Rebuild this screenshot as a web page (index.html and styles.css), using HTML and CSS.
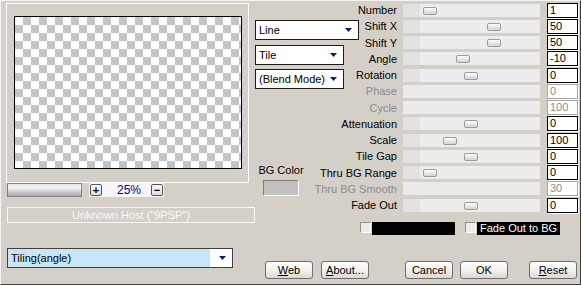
FILE: index.html
```html
<!DOCTYPE html>
<html lang="en">
<head>
    <meta charset="UTF-8">
    <title>Tiling(angle)</title>
    <link rel="stylesheet" href="styles.css">
</head>
<body>
    <div class="window">
        <div class="main">
            <div class="preview-side">
                <div class="preview-frame">
                    <div class="canvas"></div>
                </div>
                <div class="zoom-row">
                    <div class="zoom-bar"></div>
                    <div class="zoom-spin">
                        <span class="spin-btn">+</span>
                        <span class="zoom-value">25%</span>
                        <span class="spin-btn spin-minus">&minus;</span>
                    </div>
                </div>
                <div class="host-status">Unknown Host ("9PSP")</div>
            </div>

            <div class="controls">
                <div class="params-area">
                    <div class="mode-panel">
                        <div class="select select-line"><span>Line</span><svg class="arrow" width="7" height="4"><path d="M0 0h7L3.5 4z"/></svg></div>
                        <div class="select select-tile"><span>Tile</span><svg class="arrow" width="7" height="4"><path d="M0 0h7L3.5 4z"/></svg></div>
                        <div class="select select-blend"><span>(Blend Mode)</span><svg class="arrow" width="7" height="4"><path d="M0 0h7L3.5 4z"/></svg></div>
                        <div class="bg-color">
                            <span>BG Color</span>
                            <div class="swatch"></div>
                        </div>
                    </div>

                    <div class="param-list">
                        <span class="param-label">Number</span>
                        <div class="track"><span class="thumb" style="--pos: 20px"></span></div>
                        <div class="num">1</div>

                        <span class="param-label">Shift X</span>
                        <div class="track"><span class="thumb" style="--pos: 84px"></span></div>
                        <div class="num">50</div>

                        <span class="param-label">Shift Y</span>
                        <div class="track"><span class="thumb" style="--pos: 84px"></span></div>
                        <div class="num">50</div>

                        <span class="param-label">Angle</span>
                        <div class="track"><span class="thumb" style="--pos: 53px"></span></div>
                        <div class="num">-10</div>

                        <span class="param-label">Rotation</span>
                        <div class="track"><span class="thumb" style="--pos: 61px"></span></div>
                        <div class="num">0</div>

                        <span class="param-label disabled">Phase</span>
                        <div class="track track-off"></div>
                        <div class="num disabled">0</div>

                        <span class="param-label disabled">Cycle</span>
                        <div class="track track-off"></div>
                        <div class="num disabled">100</div>

                        <span class="param-label">Attenuation</span>
                        <div class="track"><span class="thumb" style="--pos: 61px"></span></div>
                        <div class="num">0</div>

                        <span class="param-label">Scale</span>
                        <div class="track"><span class="thumb" style="--pos: 40px"></span></div>
                        <div class="num">100</div>

                        <span class="param-label">Tile Gap</span>
                        <div class="track"><span class="thumb" style="--pos: 61px"></span></div>
                        <div class="num">0</div>

                        <span class="param-label">Thru BG Range</span>
                        <div class="track"><span class="thumb" style="--pos: 20px"></span></div>
                        <div class="num">0</div>

                        <span class="param-label disabled">Thru BG Smooth</span>
                        <div class="track track-off"></div>
                        <div class="num disabled">30</div>

                        <span class="param-label">Fade Out</span>
                        <div class="track"><span class="thumb" style="--pos: 61px"></span></div>
                        <div class="num">0</div>
                    </div>
                </div>

                <div class="flags">
                    <span class="check"></span>
                    <span class="color-bar"></span>
                    <span class="check check-second"></span>
                    <span class="color-bar">Fade Out to BG</span>
                </div>
            </div>
        </div>

        <div class="footer">
            <div class="select select-wide">
                <span class="value">Tiling(angle)</span>
                <svg class="arrow" width="7" height="4"><path d="M0 0h7L3.5 4z"/></svg>
            </div>
            <button class="btn btn-web"><u>W</u>eb</button>
            <button class="btn btn-about"><u>A</u>bout...</button>
            <button class="btn btn-cancel">Cancel</button>
            <button class="btn btn-ok">OK</button>
            <button class="btn btn-reset"><u>R</u>eset</button>
        </div>
    </div>
</body>
</html>
```

FILE: styles.css
```css
:root {
    --face: #d4d0c8;
    --navy: #0c1c6c;
    --disabled: #8c8c8c;
}

body {
    margin: 0;
    background: var(--face);
}

.window {
    width: 581px;
    height: 285px;
    box-sizing: border-box;
    border: 1px solid;
    border-color: #f4f4f4 #404040 #404040 #f4f4f4;
    background: var(--face);
    padding: 1px 0 0 5px;
    display: flex;
    flex-direction: column;
    font: 11px "Liberation Sans", Arial, sans-serif;
    color: #000;
}

.main {
    display: flex;
}

/* preview side */
.preview-side {
    width: 249px;
    display: flex;
    flex-direction: column;
}

.preview-frame {
    margin-top: 1px;
    width: 243px;
    height: 180px;
    box-sizing: border-box;
    border: 1px solid #fbfbfb;
    padding: 12px 0 0 7px;
}

.canvas {
    width: 228px;
    height: 153px;
    box-sizing: border-box;
    border: 1px solid #000;
    background: repeating-conic-gradient(#c4c4c4 0 25%, #fff 0 50%) 0 0 / 16px 16px;
}

.zoom-row {
    display: flex;
    height: 14px;
    margin-left: 1px;
}

.zoom-bar {
    width: 75px;
    box-sizing: border-box;
    border: 1px solid #8a8a8a;
    border-left-color: #22c022;
    background: linear-gradient(#e4e4e4, #f6f6f6 30%, #c8c8c8 70%, #a6a6a6);
}

.zoom-spin {
    margin-left: 7px;
    width: 75px;
    box-sizing: border-box;
    padding: 0 1px;
    background: #f6f6f6;
    display: flex;
    align-items: center;
}

.spin-btn {
    width: 12px;
    height: 12px;
    box-sizing: border-box;
    border: 1px solid #555;
    border-radius: 2px;
    background: linear-gradient(#fdfdfd, #dcdcdc);
    font-size: 11px;
    font-weight: bold;
    line-height: 10px;
    text-align: center;
}

.zoom-value {
    margin-left: 15px;
    color: #000080;
    font-size: 12px;
}

.spin-minus {
    margin-left: auto;
}

.host-status {
    margin: 10px 0 0 1px;
    width: 248px;
    height: 16px;
    box-sizing: border-box;
    border: 1px solid #f8f8f8;
    color: #f8f8f8;
    text-align: center;
    line-height: 14px;
}

/* right side controls */
.controls {
    flex: 1;
    display: flex;
    flex-direction: column;
}

.params-area {
    display: grid;
}

.params-area > * {
    grid-area: 1 / 1;
}

.mode-panel {
    display: flex;
    flex-direction: column;
    align-items: flex-start;
    padding-top: 18px;
}

.select {
    height: 20px;
    box-sizing: border-box;
    border: 1px solid #1c1c1c;
    background: #fff;
    display: flex;
    align-items: center;
    justify-content: space-between;
    padding: 0 6px 0 3px;
}

.arrow {
    fill: var(--navy);
    flex: none;
}

.select-line {
    width: 104px;
}

.select-tile {
    width: 89px;
    margin-top: 5px;
}

.select-blend {
    width: 89px;
    margin-top: 4px;
}

.bg-color {
    margin: 74px 0 0 3px;
    width: 46px;
    display: flex;
    flex-direction: column;
    align-items: center;
    line-height: 14px;
}

.swatch {
    margin-top: 3px;
    width: 36px;
    height: 16px;
    box-sizing: border-box;
    border: 1px solid;
    border-color: #808080 #fff #fff #808080;
    background: #c0c0c0;
}

.param-list {
    display: grid;
    grid-template-columns: 142px 143px 40px;
    grid-auto-rows: 16.25px;
    align-items: center;
}

.param-label {
    text-align: right;
    line-height: 16px;
    white-space: nowrap;
}

.track {
    margin-left: 6px;
    width: 137px;
    height: 13px;
    box-sizing: border-box;
    padding-top: 3px;
    display: flex;
    align-items: flex-start;
    background: linear-gradient(to right, #e2e2e2 0 17px, #ececec 17px);
}

.track-off {
    background: #ebebeb;
}

.thumb {
    margin-left: var(--pos);
    width: 14px;
    height: 8px;
    box-sizing: border-box;
    border: 1px solid #9c9c9c;
    border-radius: 2px;
    background: linear-gradient(#fdfdfd, #d4d4d4);
}

.num {
    margin-left: 7px;
    width: 31px;
    height: 15px;
    box-sizing: border-box;
    border: 1px solid #000;
    box-shadow: 1px 1px 0 #fff;
    background: #fff;
    padding-left: 2px;
    line-height: 13px;
}

.disabled {
    color: var(--disabled);
}

.num.disabled {
    border-color: #a8a8a8;
}

.flags {
    display: flex;
    align-items: flex-start;
    margin-top: 9px;
    padding-left: 105px;
}

.check {
    width: 11px;
    height: 11px;
    box-sizing: border-box;
    border: 1px solid;
    border-color: #909090 #fff #fff #909090;
    background: #ececec;
}

.check-second {
    margin-left: 10px;
}

.color-bar {
    margin-left: 1px;
    width: 83px;
    height: 13px;
    box-sizing: border-box;
    padding-left: 3px;
    background: #000;
    color: #fff;
    line-height: 13px;
}

/* footer */
.footer {
    margin-top: auto;
    display: flex;
    align-items: flex-end;
    padding-bottom: 5px;
}

.select-wide {
    width: 226px;
    margin: 0 0 11px 1px;
    padding: 0 6px 0 0;
    border-color: #404040;
}

.select-wide .value {
    flex: 1;
    align-self: stretch;
    margin-right: 9px;
    padding-left: 3px;
    background: #c8e6f8;
    line-height: 18px;
}

.btn {
    width: 48px;
    height: 18px;
    box-sizing: border-box;
    padding: 0;
    border: 1px solid #6f6f6f;
    border-radius: 3px;
    background: linear-gradient(#fefefe, #f1f0eb 55%, #dad8d0);
    font: inherit;
    color: #000;
    line-height: 16px;
}

.btn-web {
    margin-left: 32px;
}

.btn-about {
    margin-left: 8px;
}

.btn-cancel {
    margin-left: 36px;
}

.btn-ok {
    margin-left: 7px;
}

.btn-reset {
    margin-left: 21px;
}
```
